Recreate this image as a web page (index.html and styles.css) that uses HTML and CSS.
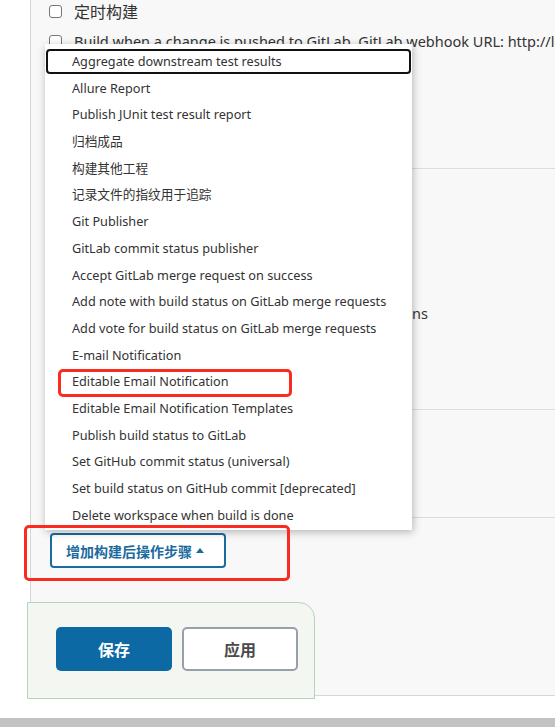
FILE: index.html
```html
<!DOCTYPE html>
<html lang="zh">
<head>
<meta charset="utf-8">
<title>Jenkins 构建后操作</title>
<link rel="stylesheet" href="styles.css">
</head>
<body>
<div class="panel">
  <section class="sec sec-triggers">
    <div class="check-list">
      <label class="check-row"><span class="box"></span><span>定时构建</span></label>
      <label class="check-row"><span class="box"></span><span class="latin">Build when a change is pushed to GitLab. GitLab webhook URL: http://localhost:8080/project/demo</span></label>
    </div>
  </section>
  <section class="sec sec-env">
    <div class="hidden-line">Inspect build log for published Gradle build scans</div>
  </section>
  <section class="sec sec-build"></section>
  <section class="sec sec-post">
    <button class="add-btn" type="button">增加构建后操作步骤 <span class="caret"></span></button>
    <div class="footer">
      <button class="btn btn-primary" type="button">保存</button>
      <button class="btn btn-secondary" type="button">应用</button>
    </div>
  </section>
</div>
<div class="hscroll"></div>

<ul class="menu">
  <li class="item focused">Aggregate downstream test results</li>
  <li class="item">Allure Report</li>
  <li class="item">Publish JUnit test result report</li>
  <li class="item">归档成品</li>
  <li class="item">构建其他工程</li>
  <li class="item">记录文件的指纹用于追踪</li>
  <li class="item">Git Publisher</li>
  <li class="item">GitLab commit status publisher</li>
  <li class="item">Accept GitLab merge request on success</li>
  <li class="item">Add note with build status on GitLab merge requests</li>
  <li class="item">Add vote for build status on GitLab merge requests</li>
  <li class="item">E-mail Notification</li>
  <li class="item">Editable Email Notification</li>
  <li class="item">Editable Email Notification Templates</li>
  <li class="item">Publish build status to GitLab</li>
  <li class="item">Set GitHub commit status (universal)</li>
  <li class="item">Set build status on GitHub commit [deprecated]</li>
  <li class="item">Delete workspace when build is done</li>
</ul>

<div class="mark mark-item"></div>
<div class="mark mark-btn"></div>
</body>
</html>
```

FILE: styles.css
```css
* { box-sizing: border-box; }
html, body { margin: 0; padding: 0; overflow: hidden; }
body {
  width: 555px;
  height: 727px;
  background: #fff;
  font-family: "Noto Sans", "Noto Sans CJK SC", sans-serif;
  color: #333;
  position: relative;
}

.panel {
  margin-left: 30px;
  background: #f8f8f8;
  border-left: 1px solid #d6d6d6;
  border-bottom: 1px solid #d6d6d6;
}

.sec { padding-left: 18px; position: relative; }
.sec-triggers { height: 169px; }
.sec-env { height: 241px; padding-top: 133px; }
.sec-build { height: 108px; }
.sec-triggers::after, .sec-env::after, .sec-build::after {
  content: "";
  position: absolute;
  left: 18px; right: 0; bottom: 0;
  border-bottom: 1px solid #dcdcdc;
}

.check-list { display: flex; flex-direction: column; gap: 8px; }
.check-row {
  display: flex;
  align-items: center;
  gap: 12px;
  height: 22px;
  font-size: 16px;
  color: #333;
  white-space: nowrap;
  overflow: hidden;
}
.latin { font-size: 14.5px; }
.box {
  flex: none;
  width: 13px; height: 13px;
  border: 1px solid #767676;
  border-radius: 3px;
  background: #fff;
}

.hidden-line {
  width: 379px;
  height: 22px;
  line-height: 22px;
  font-size: 14.5px;
  text-align: right;
  white-space: nowrap;
  overflow: hidden;
  direction: rtl;
}

.sec-post { padding-top: 15px; height: 177px; }
.add-btn {
  display: flex;
  align-items: center;
  gap: 4px;
  margin-left: 1px;
  width: 176px;
  height: 35px;
  padding: 0 0 0 14px;
  background: #fff;
  border: 2px solid #1b6b9e;
  border-radius: 4px;
  color: #1b6b9e;
  font-family: "Noto Sans CJK SC", sans-serif;
  font-size: 14px;
  font-weight: 700;
}
.caret {
  width: 0; height: 0;
  border-left: 4.5px solid transparent;
  border-right: 4.5px solid transparent;
  border-bottom: 5px solid #1b6b9e;
}

.footer {
  margin: 34px 0 0 -22px;
  width: 288px;
  height: 97px;
  background: #f4f7f1;
  border: 1px solid #b3d5bd;
  border-top-right-radius: 16px;
  display: flex;
  align-items: flex-start;
  gap: 10px;
  padding: 24px 0 0 28px;
  position: relative;
}
.btn {
  width: 116px;
  height: 44px;
  border-radius: 5px;
  font-family: "Noto Sans CJK SC", sans-serif;
  font-size: 16px;
  font-weight: 700;
}
.btn-primary {
  background: #0c69a3;
  border: none;
  color: #fff;
}
.btn-secondary {
  background: #fff;
  border: 2px solid #96a0a9;
  color: #4a4a4a;
}

.hscroll {
  margin-top: 22px;
  height: 9px;
  background: #c2c2c2;
}

.menu {
  position: absolute;
  left: 45px;
  top: 44px;
  width: 367px;
  height: 486px;
  margin: 0;
  padding: 4px 0 0;
  list-style: none;
  background: #fff;
  box-shadow: 1px 2px 8px rgba(0, 0, 0, 0.28);
}
.item {
  height: 26.7px;
  line-height: 26.7px;
  padding-left: 27px;
  font-size: 12.7px;
  color: #333;
  white-space: nowrap;
  border-radius: 5px;
}
.item.focused {
  outline: 2px solid #111;
  outline-offset: -3px;
}

.mark {
  position: absolute;
  border: 3px solid #fa2b1f;
  border-radius: 5px;
}
.mark-item { left: 58px; top: 369px; width: 234px; height: 28px; }
.mark-btn { left: 24px; top: 525px; width: 266px; height: 56px; }
```
